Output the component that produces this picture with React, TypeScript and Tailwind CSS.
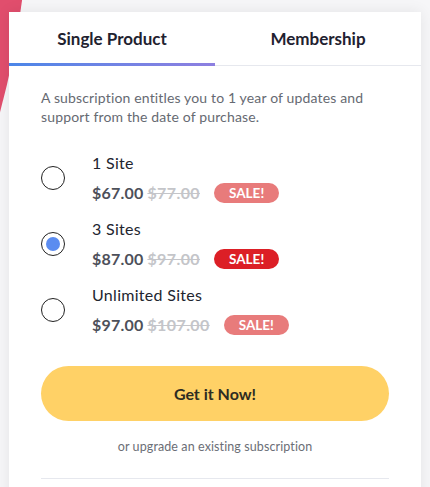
import React, { useState } from 'react';

const plans = [
  { name: '1 Site', price: '$67.00', old: '$77.00' },
  { name: '3 Sites', price: '$87.00', old: '$97.00' },
  { name: 'Unlimited Sites', price: '$97.00', old: '$107.00' },
];

export default function App() {
  const [tab, setTab] = useState<'single' | 'membership'>('single');
  const [selected, setSelected] = useState(1);

  return (
    <div
      className="relative h-[487px] w-[430px] overflow-hidden bg-[#f6f6f8]"
      style={{ fontFamily: 'Lato, "Noto Sans", sans-serif' }}
    >
      {/* pink shape peeking from behind the card */}
      <div className="absolute -left-[1564px] -top-[893px] h-[1592px] w-[1592px] rounded-full bg-[#e14e6d]" />

      <div className="relative ml-[9px] mt-[12px] w-[412px] bg-white shadow-[0_0_14px_rgba(0,0,0,0.08)]">
        <div className="flex border-b border-[#e6e8ee]">
          <button
            onClick={() => setTab('single')}
            className="relative flex h-[53px] flex-1 items-center justify-center text-[17px] font-bold text-[#1f2230]"
          >
            Single Product
            {tab === 'single' && (
              <span className="absolute -bottom-px left-0 right-0 h-[3px] bg-gradient-to-r from-[#4a86e8] to-[#8d7fe0]" />
            )}
          </button>
          <button
            onClick={() => setTab('membership')}
            className="relative flex h-[53px] flex-1 items-center justify-center text-[17px] font-bold text-[#1f2230]"
          >
            Membership
            {tab === 'membership' && (
              <span className="absolute -bottom-px left-0 right-0 h-[3px] bg-gradient-to-r from-[#4a86e8] to-[#8d7fe0]" />
            )}
          </button>
        </div>

        <div className="px-[32px] pt-[22px]">
          <p className="text-[14px] leading-[19px] tracking-[0.15px] text-[#666a72]">
            A subscription entitles you to 1 year of updates and support from the date of purchase.
          </p>

          <div className="mt-[27px] flex flex-col gap-[16px]">
            {plans.map((p, i) => (
              <label key={p.name} className="flex cursor-pointer items-center" onClick={() => setSelected(i)}>
                <span className="flex h-[24px] w-[24px] items-center justify-center rounded-full border border-[#222]">
                  {selected === i && <span className="h-[14px] w-[14px] rounded-full bg-[#5b8cf0]" />}
                </span>
                <div className="ml-[27px] flex flex-col">
                  <span className="text-[16px] leading-[20px] tracking-[0.3px] text-[#22252f]">{p.name}</span>
                  <div className="mt-[10px] flex items-center">
                    <span className="text-[16px] font-bold leading-[20px] tracking-[0.2px] text-[#4d505a]">{p.price}</span>
                    <span className="ml-[4px] text-[16px] font-bold leading-[20px] tracking-[0.4px] text-[#c4c5c9] line-through">
                      {p.old}
                    </span>
                    <span
                      className={`ml-[14px] rounded-full px-[15px] text-[13.5px] font-bold leading-[20px] text-white ${
                        selected === i ? 'bg-[#dc1f26]' : 'bg-[#e87b7b]'
                      }`}
                    >
                      SALE!
                    </span>
                  </div>
                </div>
              </label>
            ))}
          </div>

          <button className="mt-[31px] flex h-[55px] w-full items-center justify-center rounded-full bg-[#ffd166] text-[16px] font-bold text-[#2e2c22]">
            Get it Now!
          </button>

          <p className="mt-[17px] text-center text-[12.5px] leading-[18px] tracking-[0.1px] text-[#6b6e76]">
            or upgrade an existing subscription
          </p>

          <div className="mt-[22px] h-px bg-[#e6e8ee]" />
          <div className="h-[40px]" />
        </div>
      </div>
    </div>
  );
}
